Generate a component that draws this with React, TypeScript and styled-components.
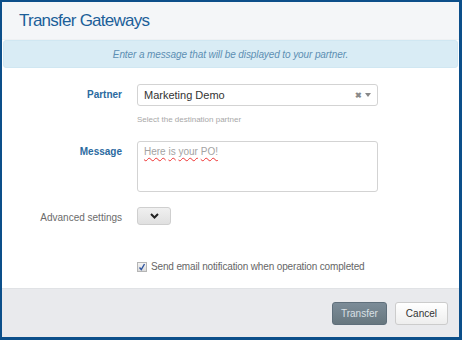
import React from 'react';
import styled, {createGlobalStyle} from 'styled-components';

const GlobalStyle = createGlobalStyle`
  html, body {
    margin: 0;
    padding: 0;
    background: #ffffff;
  }
  body {
    font-family: "Liberation Sans", Arial, sans-serif;
  }
`;

const Frame = styled.div`
  width: 462px;
  height: 340px;
  box-sizing: border-box;
  border: 2px solid #0c4f8a;
  border-right-width: 3px;
  border-bottom-width: 3px;
  display: flex;
  flex-direction: column;
  background: #ffffff;
`;

const Header = styled.div`
  height: 38px;
  background: #f4f6f8;
  display: flex;
  align-items: center;
  padding-left: 17px;
  padding-top: 1px;
  box-sizing: border-box;
  border-bottom: 1px solid #eef1f3;
`;

const Title = styled.h1`
  margin: 0;
  font-size: 17px;
  font-weight: normal;
  color: #1c5f99;
  letter-spacing: -0.75px;
`;

const Notice = styled.div`
  margin: 0 1px;
  height: 28px;
  display: flex;
  align-items: center;
  justify-content: center;
  background: #d9ecf5;
  border: 1px solid #d0e7f2;
  border-radius: 3px;
  box-sizing: border-box;
  font-size: 10px;
  font-style: italic;
  letter-spacing: -0.1px;
  color: #5d8fb3;
`;

const Form = styled.div`
  flex: 1 1 auto;
  display: grid;
  grid-template-columns: 120px 241px;
  column-gap: 15px;
  align-content: start;
  padding-top: 16px;
`;

const Label = styled.div<{$strong?: boolean}>`
  text-align: right;
  font-size: 10px;
  line-height: 12px;
  padding-top: 5px;
  font-weight: ${p => (p.$strong ? 'bold' : 'normal')};
  color: ${p => (p.$strong ? '#2b6aa0' : '#6b6b6b')};
`;

const Field = styled.div<{$gap?: number}>`
  margin-bottom: ${p => p.$gap ?? 0}px;
`;

const Select = styled.div`
  height: 22px;
  box-sizing: border-box;
  border: 1px solid #d3d3d3;
  border-radius: 3px;
  display: flex;
  align-items: center;
  padding: 0 6px;
  font-size: 11px;
  color: #333;
`;

const SelectValue = styled.span`
  flex: 1 1 auto;
`;

const SelectTools = styled.span`
  display: flex;
  align-items: center;
  gap: 3px;
  color: #8a8a8a;
  font-size: 8px;
  font-weight: bold;
`;

const Help = styled.div`
  font-size: 8px;
  line-height: 10px;
  color: #a8a8a8;
  margin-top: 9px;
`;

const TextArea = styled.div`
  height: 51px;
  box-sizing: border-box;
  border: 1px solid #d3d3d3;
  border-radius: 3px;
  padding: 4px 6px;
  font-size: 10px;
  color: #a3a3a3;
`;

const Squiggle = styled.span`
  text-decoration: underline wavy #e33;
  text-decoration-thickness: 1px;
  text-underline-offset: 2px;
`;

const ToggleButton = styled.button`
  width: 34px;
  height: 18px;
  padding: 0;
  border: 1px solid #cfcfcf;
  border-radius: 3px;
  background: linear-gradient(#f0f0f0, #e0e0e0);
  display: flex;
  align-items: center;
  justify-content: center;
`;

const CheckRow = styled.label`
  grid-column: 2;
  display: flex;
  align-items: center;
  gap: 4px;
  font-size: 10px;
  line-height: 12px;
  letter-spacing: -0.15px;
  color: #666;
  white-space: nowrap;
`;

const Box = styled.span`
  width: 10px;
  height: 10px;
  box-sizing: border-box;
  border: 1px solid #b5b5b5;
  background: linear-gradient(#f4f4f4, #dadada);
  display: flex;
  align-items: center;
  justify-content: center;
`;

const Footer = styled.div`
  height: 48px;
  background: #e9eaed;
  border-top: 1px solid #e0e2e5;
  display: flex;
  align-items: center;
  justify-content: flex-end;
  gap: 8px;
  padding-right: 11px;
`;

const Button = styled.button<{$primary?: boolean}>`
  height: 23px;
  padding: 0 ${p => (p.$primary ? 8 : 10)}px;
  border-radius: 3px;
  font-family: inherit;
  font-size: 10px;
  border: 1px solid ${p => (p.$primary ? '#5f6f7b' : '#cccccc')};
  color: ${p => (p.$primary ? '#d9e0e5' : '#333')};
  background: ${p => (p.$primary
    ? 'linear-gradient(#7c8c98, #67777f)'
    : 'linear-gradient(#ffffff, #eeeeee)')};
`;

const App = () => {
  return (
    <>
      <GlobalStyle/>
      <Frame>
        <Header>
          <Title>Transfer Gateways</Title>
        </Header>
        <Notice>Enter a message that will be displayed to your partner.</Notice>
        <Form>
          <Label $strong>Partner</Label>
          <Field $gap={16}>
            <Select>
              <SelectValue>Marketing Demo</SelectValue>
              <SelectTools>
                <span>✖</span>
                <svg width="6" height="4" viewBox="0 0 6 4"><path d="M0 0h6L3 4z" fill="#888"/></svg>
              </SelectTools>
            </Select>
            <Help>Select the destination partner</Help>
          </Field>
          <Label $strong>Message</Label>
          <Field $gap={15}>
            <TextArea><Squiggle>Here</Squiggle> <Squiggle>is</Squiggle> <Squiggle>your</Squiggle> <Squiggle>PO!</Squiggle></TextArea>
          </Field>
          <Label>Advanced settings</Label>
          <Field $gap={36}>
            <ToggleButton>
              <svg width="9" height="6" viewBox="0 0 9 6"><path d="M1 1l3.5 3.5L8 1" fill="none" stroke="#222" strokeWidth="2"/></svg>
            </ToggleButton>
          </Field>
          <div/>
          <CheckRow>
            <Box>
              <svg width="8" height="8" viewBox="0 0 8 8"><path d="M1.5 4.5l1.8 2L6.5 1" fill="none" stroke="#2f55a0" strokeWidth="1.4"/></svg>
            </Box>
            Send email notification when operation completed
          </CheckRow>
        </Form>
        <Footer>
          <Button $primary>Transfer</Button>
          <Button>Cancel</Button>
        </Footer>
      </Frame>
    </>
  );
};

export default App;
